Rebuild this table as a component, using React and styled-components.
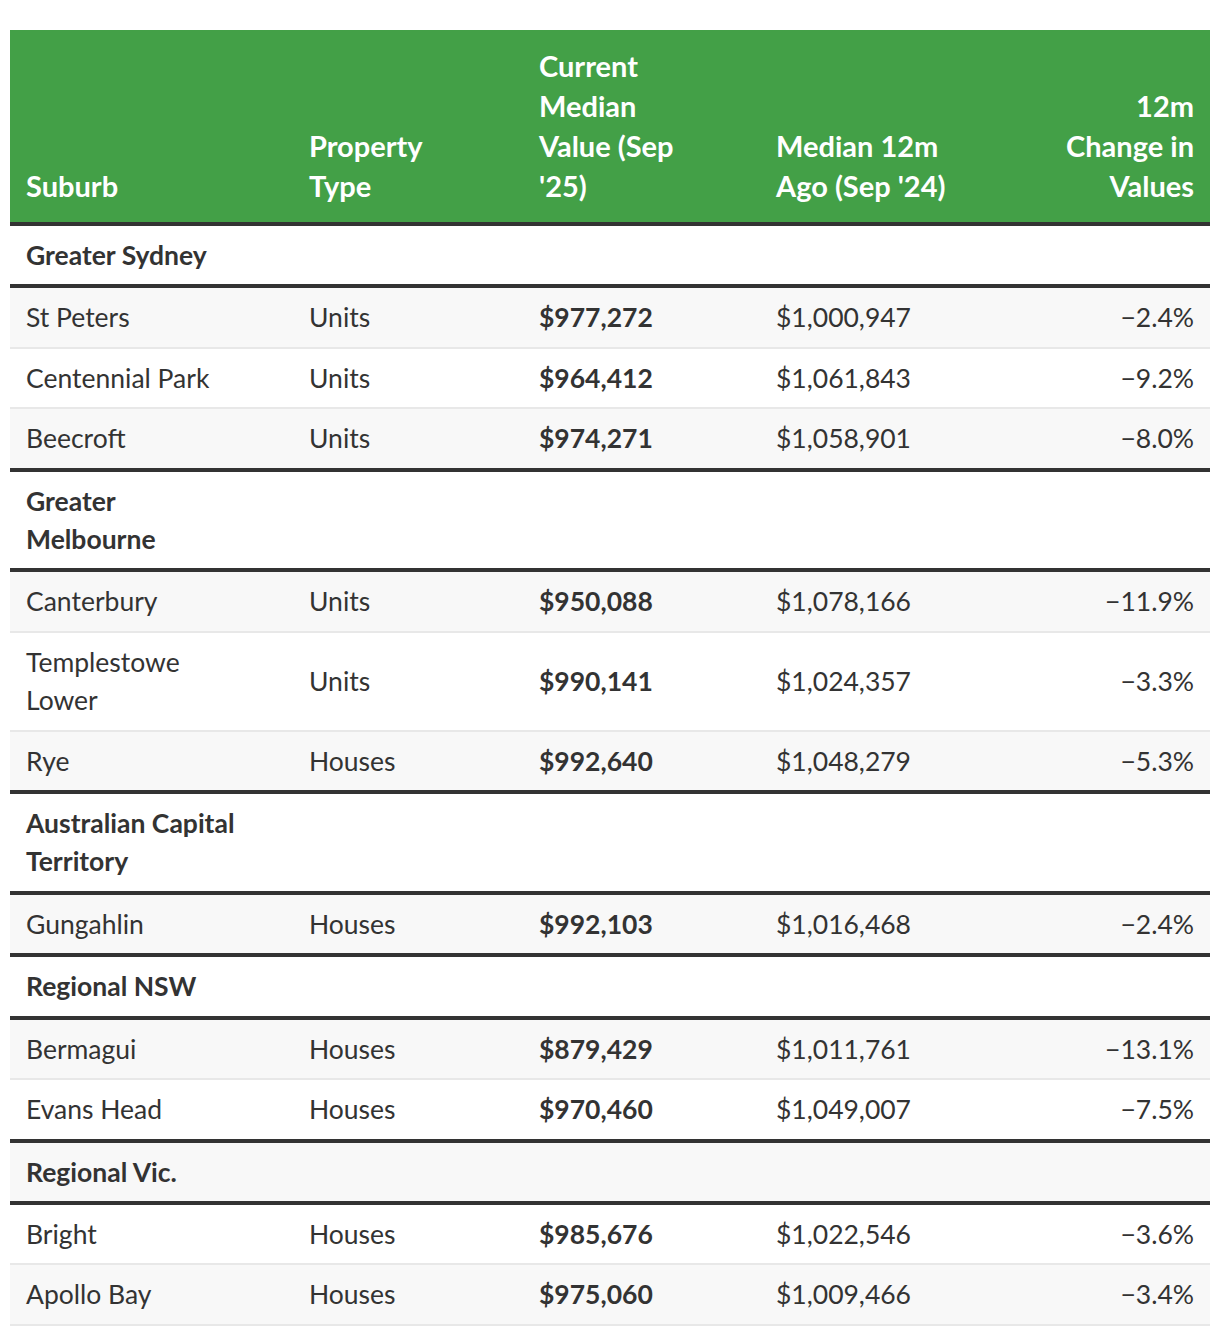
import React from 'react';
import styled, { createGlobalStyle } from 'styled-components';

const GlobalStyle = createGlobalStyle`
  body {
    margin: 0;
    background: #fff;
    font-family: Lato, "Open Sans", "Liberation Sans", sans-serif;
    color: #333;
  }
`;

const Page = styled.div`
  padding: 30px 10px 10px;
`;

const Table = styled.table`
  width: 1200px;
  border-collapse: collapse;
  table-layout: fixed;
  font-size: 26.5px;
  line-height: 38.4px;
`;

const HeadCell = styled.th`
  background: #43a047;
  color: #fff;
  font-size: 29px;
  font-weight: 700;
  line-height: 40px;
  padding: 16px 16px;
  text-align: ${(p) => (p.$right ? 'right' : 'left')};
  vertical-align: bottom;
  border-bottom: 4px solid #333;
`;

const Row = styled.tr`
  &:nth-child(even) {
    background: #f8f8f8;
  }
`;

const GroupRow = styled(Row)`
  border-top: 4px solid #333;
  border-bottom: 4px solid #333;
`;

const Cell = styled.td`
  padding: 10px 16px;
  border-bottom: 2px solid #e8e8e8;
  text-align: ${(p) => (p.$right ? 'right' : 'left')};
  font-weight: ${(p) => (p.$bold ? 700 : 400)};
  vertical-align: middle;
`;

const GroupCell = styled.td`
  padding: 10px 16px;
  font-weight: 700;
`;

// the first column in the source is narrow enough that long names wrap
const Wrapped = styled.span`
  display: block;
  max-width: 216px;
`;

const groups = [
  {
    name: 'Greater Sydney',
    rows: [
      ['St Peters', 'Units', '$977,272', '$1,000,947', '−2.4%'],
      ['Centennial Park', 'Units', '$964,412', '$1,061,843', '−9.2%'],
      ['Beecroft', 'Units', '$974,271', '$1,058,901', '−8.0%'],
    ],
  },
  {
    name: 'Greater Melbourne',
    rows: [
      ['Canterbury', 'Units', '$950,088', '$1,078,166', '−11.9%'],
      ['Templestowe Lower', 'Units', '$990,141', '$1,024,357', '−3.3%'],
      ['Rye', 'Houses', '$992,640', '$1,048,279', '−5.3%'],
    ],
  },
  {
    name: 'Australian Capital Territory',
    rows: [['Gungahlin', 'Houses', '$992,103', '$1,016,468', '−2.4%']],
  },
  {
    name: 'Regional NSW',
    rows: [
      ['Bermagui', 'Houses', '$879,429', '$1,011,761', '−13.1%'],
      ['Evans Head', 'Houses', '$970,460', '$1,049,007', '−7.5%'],
    ],
  },
  {
    name: 'Regional Vic.',
    rows: [
      ['Bright', 'Houses', '$985,676', '$1,022,546', '−3.6%'],
      ['Apollo Bay', 'Houses', '$975,060', '$1,009,466', '−3.4%'],
    ],
  },
];

export default function App() {
  return (
    <Page>
      <GlobalStyle />
      <Table>
        <colgroup>
          <col style={{ width: 283 }} />
          <col style={{ width: 230 }} />
          <col style={{ width: 237 }} />
          <col style={{ width: 250 }} />
          <col style={{ width: 200 }} />
        </colgroup>
        <thead>
          <tr>
            <HeadCell>Suburb</HeadCell>
            <HeadCell>Property<br />Type</HeadCell>
            <HeadCell>Current<br />Median<br />Value (Sep<br />'25)</HeadCell>
            <HeadCell>Median 12m<br />Ago (Sep '24)</HeadCell>
            <HeadCell $right>12m<br />Change in<br />Values</HeadCell>
          </tr>
        </thead>
        <tbody>
          {groups.map((g) => (
            <React.Fragment key={g.name}>
              <GroupRow>
                <GroupCell colSpan={5}>
                  <Wrapped>{g.name}</Wrapped>
                </GroupCell>
              </GroupRow>
              {g.rows.map(([suburb, type, now, ago, change]) => (
                <Row key={suburb}>
                  <Cell><Wrapped>{suburb}</Wrapped></Cell>
                  <Cell>{type}</Cell>
                  <Cell $bold>{now}</Cell>
                  <Cell>{ago}</Cell>
                  <Cell $right>{change}</Cell>
                </Row>
              ))}
            </React.Fragment>
          ))}
        </tbody>
      </Table>
    </Page>
  );
}
